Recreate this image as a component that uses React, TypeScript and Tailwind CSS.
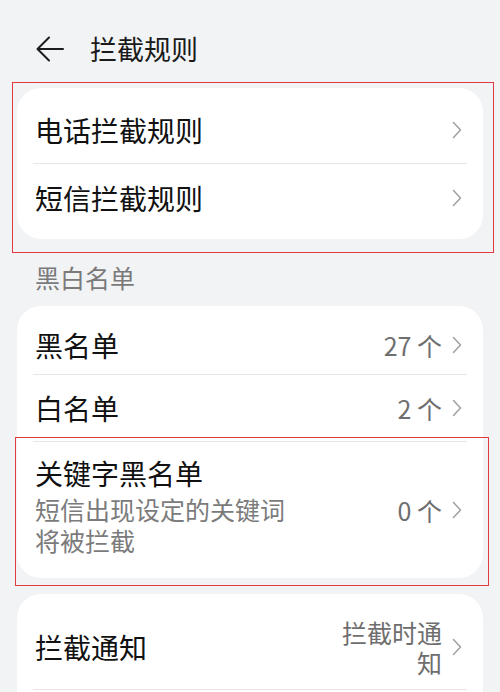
import React from 'react';

const font = { fontFamily: '"Noto Sans CJK SC", "Noto Sans", sans-serif' };

function Chevron() {
  return (
    <svg width="10" height="18" viewBox="0 0 10 18" className="shrink-0" fill="none">
      <path d="M1.5 1.5 L8.5 9 L1.5 16.5" stroke="#a0a0a0" strokeWidth="1.5" strokeLinecap="round" strokeLinejoin="round" />
    </svg>
  );
}

function Divider() {
  return <div className="mx-[16px] h-px bg-[#e6e6e6]" />;
}

type RowProps = {
  title: string;
  value?: string;
  sub?: string[];
  heightClass: string;
};

function Row({ title, value, sub, heightClass }: RowProps) {
  return (
    <div className={`flex items-center pl-[18px] pr-[21px] ${heightClass}`}>
      <div className={`flex-1 min-w-0 ${sub ? 'pb-[10px]' : ''}`}>
        <div className="text-[28px] leading-[36px] text-[#111]">{title}</div>
        {sub && (
          <div className="mt-[3px] text-[25px] leading-[31px] text-[#7b7b7b]">
            {sub.map((line) => (
              <div key={line}>{line}</div>
            ))}
          </div>
        )}
      </div>
      {value && (
        <span className="mr-[10px] text-[25px] leading-[30px] text-[#6e6e6e] text-right max-w-[104px]">{value}</span>
      )}
      <Chevron />
    </div>
  );
}

export default function App() {
  return (
    <div style={font} className="w-[500px] h-[692px] overflow-hidden bg-[#f1f3f5] px-[17px]">
      {/* Header */}
      <div className="flex items-center h-[54px] mt-[22px] mb-[12px]">
        <svg width="28" height="26" viewBox="0 0 28 26" className="ml-[19px]" fill="none">
          <path d="M27 13 H2 M13 1.5 L1.5 13 L13 24.5" stroke="#1c1c1c" strokeWidth="2" strokeLinecap="round" strokeLinejoin="round" />
        </svg>
        <h1 className="ml-[26px] text-[27px] text-[#1a1a1a]">拦截规则</h1>
      </div>

      {/* Rules card */}
      <div className="relative">
        <div className="bg-white rounded-[24px] py-[8px]">
          <Row title="电话拦截规则" heightClass="h-[67px]" />
          <Divider />
          <Row title="短信拦截规则" heightClass="h-[67px]" />
        </div>
        <div className="absolute -left-[5px] -right-[11px] -top-[6px] -bottom-[14px] border-[1.5px] border-[#e0393e] pointer-events-none" />
      </div>

      {/* Section header */}
      <div className="h-[67px] flex items-center pl-[18px] pt-[10px] text-[25px] text-[#7a7a7a]">黑白名单</div>

      {/* Lists card */}
      <div className="relative">
        <div className="bg-white rounded-[24px] pt-[10px]">
          <Row title="黑名单" value="27 个" heightClass="h-[58px]" />
          <Divider />
          <Row title="白名单" value="2 个" heightClass="h-[66px]" />
          <Divider />
          <Row title="关键字黑名单" value="0 个" sub={['短信出现设定的关键词', '将被拦截']} heightClass="h-[136px]" />
        </div>
        <div className="absolute -left-[2px] -right-[6px] top-[131px] -bottom-[8px] border-[1.5px] border-[#e0393e] pointer-events-none" />
      </div>

      {/* Notification card */}
      <div className="mt-[16px] bg-white rounded-[24px] pt-[10px]">
        <Row title="拦截通知" value="拦截时通知" heightClass="h-[85px]" />
        <Divider />
        <div className="h-[40px]" />
      </div>
    </div>
  );
}
